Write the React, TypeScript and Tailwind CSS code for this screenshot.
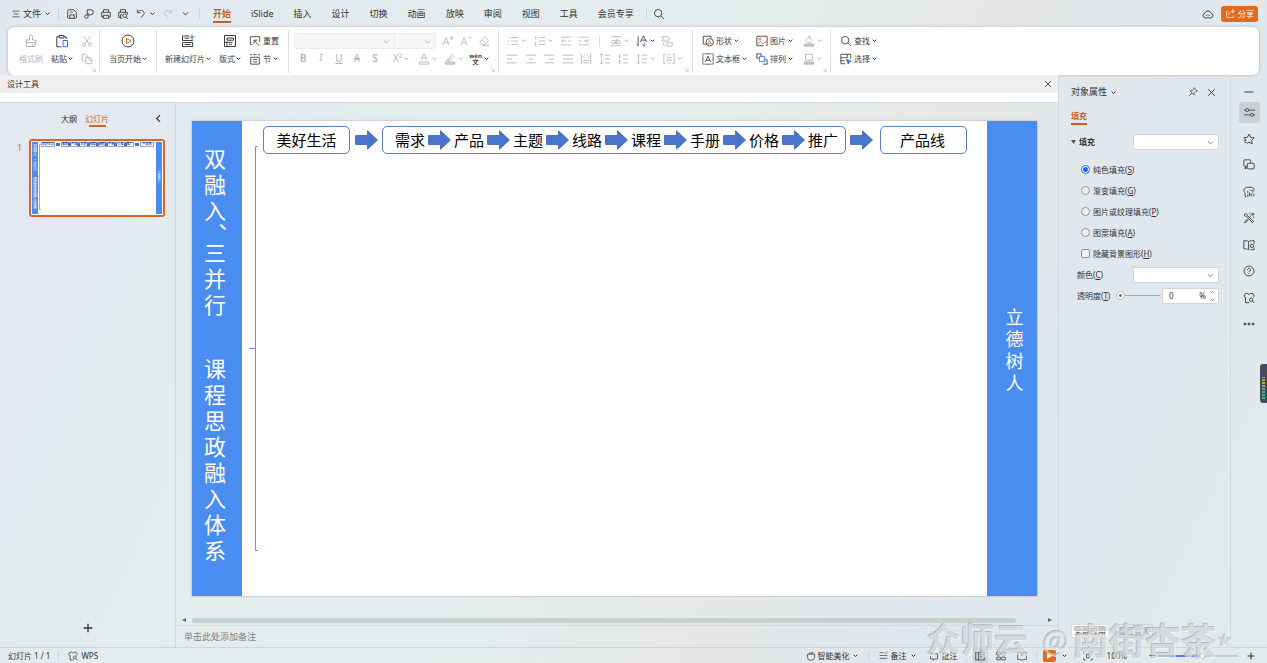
// App.tsx
import React, { useState } from 'react';
import clsx from 'clsx';

type GlyphProps = { size?: number; className?: string; children: React.ReactNode };

const Glyph: React.FC<GlyphProps> = ({ size = 13, className, children }) => (
  <svg
    width={size}
    height={size}
    viewBox="0 0 14 14"
    fill="none"
    stroke="currentColor"
    strokeWidth="1"
    className={clsx('shrink-0', className)}
    aria-hidden="true"
  >
    {children}
  </svg>
);

const ORANGE = '#d9652a';
const BLUE = '#3a6df0';

// 14x14 line icons
const icons: Record<string, React.ReactNode> = {
  menu: <path d="M2 3h10M3.500 7h7M2 11h10" />,
  save: <path d="M2 3.500V11a1 1 0 0 0 1 1h8a1 1 0 0 0 1-1V5L9 2H3a1 1 0 0 0-1 1zM4.500 12V8h5v4M5 4.800h3" />,
  output: <path d="M5 8V2h4a3 3 0 0 1 0 6H4a2 2 0 1 0 2 2V6" />,
  print: <path d="M4 5V2h6v3M4 10.500H2V5h10v5.500h-2M4 8.500h6V12H4z" />,
  preview: (
    <>
      <path d="M4 5V2h6v3M4 11H2V5h10v3M6 8H4v4h2" />
      <circle cx="9" cy="9" r="2.200" />
      <path d="M10.600 10.600 13 13" />
    </>
  ),
  undo: <path d="M3 2v4h4M3.200 5.800C5 3 8.500 2 10.500 4s1 4.500-.5 6L7.500 12" />,
  redo: <path d="M11 2v4H7M10.800 5.800C9 3 5.500 2 3.500 4s-1 4.500.5 6l2.500 2" />,
  search: (
    <>
      <circle cx="6" cy="6" r="4.300" />
      <path d="m9.200 9.200 3.800 3.800" />
    </>
  ),
  cloud: <path d="M4 11.500a2.800 2.800 0 0 1-.6-5.500 3.800 3.800 0 0 1 7.200 0 2.800 2.800 0 0 1-.6 5.500zM4.500 8.500h1M6.500 8.500h1M8.500 8.500h1" />,
  share: <path d="M4 4H3a1 1 0 0 0-1 1v6a1 1 0 0 0 1 1h7a1 1 0 0 0 1-1V9.500M4.500 9c.3-3 2-5 7-5M9 1.500 11.800 4 9 6.500" />,
  brush: <path d="M5.500 6V2.500a1.500 1.500 0 0 1 3 0V6H12v2.500H2V6zM2.800 8.500 2 12.500h9.200V8.500M8.500 12.500v-2" />,
  paste: (
    <>
      <path d="M4 2.800H1.800v10h4.500M9 2.800h2.200V5M4.200 1.500h4.600v2.500H4.200z" />
      <path d="M8 6.500h4.500v6.200H8z" stroke={BLUE} />
    </>
  ),
  cut: (
    <>
      <path d="m3 1.500 6 8M11 1.500l-6 8" />
      <circle cx="3.500" cy="11" r="1.800" />
      <circle cx="10.500" cy="11" r="1.800" />
    </>
  ),
  copy: <path d="M5 9.500H1.500v-8h4l2 2V5M5.500 5h4.500l2.500 2.500v5h-7zM9.500 5v3h3" />,
  play: (
    <>
      <circle cx="7" cy="7" r="6" />
      <path d="M5.500 4.300v5.400L10 7z" stroke={ORANGE} />
    </>
  ),
  newSlide: (
    <>
      <path d="M8 2H1.500v4.500h10.200V5.500M3.500 4.200h4.500M1.500 8.500h10.200v4H1.500zM3.500 10.500h6" />
      <path d="M11 .500v5M8.500 3h5" stroke="#1f9d6b" />
    </>
  ),
  layout: <path d="M1.500 1.500h11v11h-11zM4 4h6.500v2.200H4zM1.500 8.300h8M4 8.300v4M6 10.300h3" />,
  reset: <path d="M4 11H1.500V2h11v6M6 6l6 6.500M6 6v4M6 6h4" />,
  section: <path d="M1 2h2.500M5 2h4M10.500 2H13M2 5h10v8H2zM4.500 7.500h5M4.500 10.300h5" />,
  grow: <path d="m1 12 3.800-9L8.500 12M2.300 9h5M9 3.500h4.500M11.200 1.200v4.600" />,
  shrink: <path d="m1 12 3.800-9L8.500 12M2.300 9h5M9.500 3h4" />,
  eraser: <path d="M5 11.500 2 8.500 8 2l4.500 4.500-5 5zM4.500 5.800 9 10.300M5 12.500h8" />,
  fontColor: <path d="m3.500 8.500 3.500-7.500 3.500 7.500M4.700 6h4.600M1.500 10.500h11v2.500h-11z" />,
  highlight: (
    <>
      <path d="M3 8.500 10.500 1M5 8.500l3-1 4-4M3 8.500h4" />
      <path d="M1.500 10.500h11v2.500h-11z" fill="#d5d5d5" />
    </>
  ),
  bullets: <path d="M1 3h1.500M1 7h1.500M1 11h1.500M5 3h8M5 7h8M5 11h8" />,
  numbers: <path d="M1 2h1v3.500M1 8.500h1.500L1 12h1.800M5.500 3H13M5.500 7H13M5.500 11H13" />,
  outdent: <path d="M1 2.500h12M1 11.500h12M2 7h5M4 5 2 7l2 2M9.500 7H13" />,
  indent: <path d="M1 2.500h12M1 11.500h12M7 7h5M10 5l2 2-2 2M1 7h3" />,
  abc: (
    <>
      <path d="M1 2h12M1 12.500h12M6 6v4.500M8 3.800v6.700" />
      <circle cx="4" cy="8.200" r="2" />
      <circle cx="10" cy="8.200" r="2" />
    </>
  ),
  direction: (
    <>
      <path d="M2.500 1.500v11M.500 10.500l2 2M5 8.500 8.700 1l3.700 7.500M6.200 6h5" />
      <path d="M9.500 9v4M7.500 11l2 2 2-2" stroke={BLUE} />
    </>
  ),
  convert: <path d="M1 2h7l2 2.500L8 7H1l2-2.500zM7 8.500h6v4.500H7zM3 9v3h2.500" />,
  left: <path d="M1 2.500h12M1 7h6M1 11.500h11" />,
  center: <path d="M1 2.500h12M4 7h6M1.500 11.500h11" />,
  right: <path d="M1 2.500h12M7 7h6M2 11.500h11" />,
  justify: <path d="M1 2.500h12M1 7h12M1 11.500h12" />,
  distribute: <path d="M1.500 1v12M12.500 1v12M5.500 2.500 4 4l1.500 1.500M8.500 2.500 10 4 8.500 5.500M3.500 8.500h7M3.500 11.500h7" />,
  spaceUp: <path d="M3 1v5M1.500 2.500 3 1l1.500 1.500M3 8v5M1.500 11.500 3 13l1.500-1.500M7 2.500h6M7 7h6M7 11.500h6" />,
  spaceDown: <path d="M3 1v4.500M1.500 4 3 5.500 4.500 4M3 8.500V13M1.500 10 3 8.500 4.500 10M7 2.500h6M7 7h6M7 11.500h6" />,
  lineSpace: <path d="M3 1.500v11M1.500 3 3 1.500 4.500 3M1.500 11 3 12.500 4.500 11M7 2.500h6M7 7h6M7 11.500h6" />,
  alignText: <path d="M3 1.500H1v11h2M11 1.500h2v11h-2M4 5.500h6M4 8.500h6M5.500 3 7 1.500 8.500 3M5.500 11 7 12.500 8.500 11" />,
  shapes: (
    <>
      <path d="M5 10.500H1.500v-9h9V4" />
      <circle cx="9" cy="8.500" r="4.300" />
      <path d="m6.500 10.500 2-4 2.500 3.500z" stroke={ORANGE} />
    </>
  ),
  picture: (
    <>
      <path d="M9 12.500H1v-11h12v11h-1" />
      <path d="m1.500 11 3.800-3.500 3 3L13 6.500" stroke={ORANGE} />
      <circle cx="4.500" cy="4.700" r="1.200" stroke={ORANGE} />
    </>
  ),
  textBox: (
    <>
      <path d="M1 4v6M13 4v6M4 1h6M4 13h6" />
      <path d="M1 3.500V1h2.500M10.500 1H13v2.500M13 10.500V13h-2.500M3.500 13H1v-2.500" stroke={BLUE} />
      <path d="m4 10.500 3-7 3 7M5 8.500h4" />
    </>
  ),
  arrange: (
    <>
      <path d="M4 6H1V1h5v3M8 13h5V8h-3" />
      <path d="M4 4h6v6H4z" stroke={BLUE} />
    </>
  ),
  fillColor: (
    <>
      <path d="M3 6.500 7 2.500l4 4-2.500 2.500h-3zM5.500 1.500h3v2" />
      <path d="M1.500 10.500h11v2.500h-11z" fill="#c9c9c9" />
    </>
  ),
  outline: (
    <>
      <path d="M3 1.500h8v7H3z" />
      <path d="M1.500 10.500h11v2.500h-11z" fill="#c9c9c9" />
    </>
  ),
  select: (
    <>
      <path d="M1 1.500h11.500v5M1 1.500v4h7.500v-4M1 5.500v7h5M1 9h4.500" />
      <path d="m7.500 7.500 5.500 2-2.300 1-1 2.500z" stroke={BLUE} fill={BLUE} />
    </>
  ),
  corner: <path d="M3 3l7 7M10 4v6.500H3.500" />,
  pin: <path d="m8.500 1 4.500 4.500-2 .5-2.200 2.300-.3 2.700L3 5.500l2.700-.3L8 3zM5.500 8.500 1.500 12.500" />,
  close: <path d="m2 2 10 10M12 2 2 12" strokeWidth="1.500" />,
  dash: <path d="M.500 7h13" strokeWidth="1.300" />,
  settings: (
    <>
      <circle cx="4" cy="4" r="2" />
      <circle cx="10" cy="10" r="2" />
      <path d="M0 4h2M6 4h8M0 10h8M12 10h2" />
    </>
  ),
  star: <path d="M4 8.500 1 5.600 5.200 5 7 1.200 8.800 5l4.200.6-3 2.900.7 4.200L7 10.700l-2.500 1.400M1 9h2.500M2 11h2" />,
  animate: <path d="M4.500 8.500H2A1 1 0 0 1 1 7.500v-5.500A1 1 0 0 1 2 1h6a1 1 0 0 1 1 1v2.500M6 5h6a1 1 0 0 1 1 1v4.500a1 1 0 0 1-1 1H6a1 1 0 0 1-1-1V6a1 1 0 0 1 1-1zM3 9v3M1.500 10.500h3" />,
  assistant: (
    <>
      <path d="M2.500 8v4.500H4M2.500 8C.5 6.500.5 5 1.500 3.500 2.300 2 3.500 1.500 5 1.500h4c2 0 3.200.7 3.800 2 .4 1 .2 2-.8 2.500L8.500 5" />
      <path d="M5.500 5.500v2.500M7.500 7.500v4.500M9.500 8.500v3.500M5.500 10v2.500M11.500 7.500v1.500M11.500 12c1-.3 1.500-1 1.500-2.500" />
    </>
  ),
  tools: (
    <>
      <path d="M2 2.500c1.500-1 3-.5 3 1.500l7.500 7-1.500 1.500-7-7.500c-2 0-3-1-2-2.500zM5.500 8 1.500 12l1 1 4-4M8 5.500l2-2" />
      <circle cx="11.500" cy="2.500" r="1.200" />
      <path d="M8 1v1.500M12.500 5.500v1.500" />
    </>
  ),
  book: (
    <>
      <path d="M6.500 3C5 2 3 2 1 2v9.500c2 0 4 0 5.500 1.200zM6.500 3C9 1.500 11 2 13 2v3.500M8.500 12.500H13V10" />
      <circle cx="10.500" cy="8" r="2" />
    </>
  ),
  help: (
    <>
      <circle cx="7" cy="7" r="5.800" />
      <path d="M5.300 5.500a1.700 1.700 0 1 1 2.500 1.500c-.6.400-.8.700-.8 1.300M7 9.500v1" />
    </>
  ),
  shirt: (
    <>
      <path d="M3 6.500 1 5l1.500-3L5 1.500c1 1.500 3 1.500 4 0l2.500.5L13 5l-1.500 1.500M3 6v6.500h4.500" />
      <circle cx="9.500" cy="9" r="2" />
      <path d="M11 10.500 13 13" />
    </>
  ),
  more: (
    <>
      <circle cx="2.300" cy="7" r="1.200" fill="#9a9fa3" />
      <circle cx="7" cy="7" r="1.200" fill="#9a9fa3" />
      <circle cx="11.700" cy="7" r="1.200" fill="#9a9fa3" />
    </>
  ),
  plus: <path d="M7 1v12M1 7h12" strokeWidth="1.800" />,
  minus: <path d="M1 7h12" strokeWidth="2.200" />,
  beautify: <path d="M2 4.500h10V9a5 4 0 0 1-10 0zM4 4.500 5.500 2 7 4l2-2.500L10.500 4.500" />,
  notes: <path d="M1 2.500h6M1 7h12M1 11.500h12M8.500 2.500 10 4l3-3" />,
  comment: <path d="M4 4h8v7H8l-2 2v-2H2V7M3 1v4M1 3h4" />,
  normalView: <path d="M1 1.500h12v11H1zM5 1.500v11M7 5h4M7 8h4" />,
  gridView: <path d="M1 1.500h5v4H1zM8 1.500h5v4H8zM1 8.500h5v4H1zM8 8.500h5v4H8z" />,
  readView: <path d="M7 3C5 1.800 3 1.800 1 1.800v10c2 0 4 0 6 1.200 2-1.200 4-1.200 6-1.200v-10c-2 0-4 0-6 1.200v4" />,
  fit: <path d="M1 4V1.500h3M10 1.500h3V4M13 10v2.500h-3M4 12.500H1V10M5 4.500h4v5H5z" />,
};

const Chevron = ({ size = 5, className }: { size?: number; className?: string }) => (
  <svg
    width={size}
    height={size}
    viewBox="0 0 6 6"
    fill="none"
    stroke="currentColor"
    strokeWidth={size > 5 ? 0.8 : 1.2}
    className={clsx('shrink-0', className)}
    aria-hidden="true"
  >
    <path d="M.800 2 3 4.200 5.200 2" />
  </svg>
);

type ToolProps = {
  icon?: string;
  label?: string;
  name?: string;
  menu?: boolean;
  muted?: boolean;
  className?: string;
  children?: React.ReactNode;
};

const Tool: React.FC<ToolProps> = ({ icon, label, name, menu, muted, className, children }) => (
  <button
    type="button"
    aria-label={label ? undefined : name}
    className={clsx(
      'flex h-[18px] shrink-0 items-center gap-[2px] whitespace-nowrap',
      label ? 'justify-start' : 'justify-center',
      muted ? 'text-[#b4b4b4]' : 'text-[#3c3c3c]',
      className
    )}
  >
    {icon && <Glyph size={12}>{icons[icon]}</Glyph>}
    {children}
    {label && <span>{label}</span>}
    {menu && <Chevron />}
  </button>
);

// Tall button: icon above, caption below
const BigTool = ({ icon, label, menu, muted }: { icon: string; label: string; menu?: boolean; muted?: boolean }) => (
  <button
    type="button"
    className={clsx('flex shrink-0 flex-col items-center whitespace-nowrap', muted ? 'text-[#b4b4b4]' : 'text-[#3c3c3c]')}
  >
    <span className="flex h-[18px] items-center">
      <Glyph size={14}>{icons[icon]}</Glyph>
    </span>
    <span className="flex h-[18px] items-center gap-px">
      {label}
      {menu && <Chevron />}
    </span>
  </button>
);

const Group = ({ className, corner, children }: { className?: string; corner?: boolean; children: React.ReactNode }) => (
  <div className={clsx('relative h-[43px] shrink-0 border-r border-[#dedede] pt-[2px]', className)}>
    {children}
    {corner && (
      <Glyph size={6} className="absolute right-[2px] bottom-0 text-[#9a9a9a]">
        {icons.corner}
      </Glyph>
    )}
  </div>
);

const TABS = ['开始', 'iSlide', '插入', '设计', '切换', '动画', '放映', '审阅', '视图', '工具', '会员专享'];

const TitleBar: React.FC = () => {
  const [active, setActive] = useState('开始');

  return (
    <header className="flex h-[27px] shrink-0 items-center pl-[11px] pr-[9px] text-[9px]">
      <button type="button" className="flex items-center gap-[2px]">
        <Glyph size={10}>{icons.menu}</Glyph>
        <span>文件</span>
        <Chevron className="ml-[2px]" />
      </button>
      <span className="ml-2 h-3 w-px bg-[#cfd4d8]" />
      <div className="ml-1 flex items-center">
        {[
          ['save', '保存'],
          ['output', '输出'],
          ['print', '打印'],
          ['preview', '打印预览'],
        ].map(([icon, name]) => (
          <button key={icon} type="button" aria-label={name} className="flex w-[17px] justify-center">
            <Glyph size={12}>{icons[icon]}</Glyph>
          </button>
        ))}
        <button type="button" aria-label="撤销" className="ml-1 flex w-5 items-center justify-between">
          <Glyph size={11}>{icons.undo}</Glyph>
          <Chevron />
        </button>
        <button type="button" aria-label="恢复" className="ml-2 text-[#b9bfc4]">
          <Glyph size={11}>{icons.redo}</Glyph>
        </button>
        <button type="button" aria-label="自定义" className="ml-2">
          <Chevron size={7} />
        </button>
      </div>
      <span className="ml-[10px] h-3 w-px bg-[#cfd4d8]" />
      <nav className="ml-[13px] flex gap-5">
        {TABS.map((tab) => (
          <button
            key={tab}
            type="button"
            onClick={() => setActive(tab)}
            className={clsx(
              'mt-[3px] border-b-2 pb-px leading-[13px] whitespace-nowrap',
              tab === active ? 'border-[#cf5a1c] font-bold text-[#cf5a1c]' : 'border-transparent'
            )}
          >
            {tab}
          </button>
        ))}
      </nav>
      <span className="ml-[12px] h-3 w-px bg-[#cfd4d8]" />
      <button type="button" aria-label="搜索" className="ml-[6px]">
        <Glyph size={12}>{icons.search}</Glyph>
      </button>
      <div className="flex-1" />
      <Glyph size={12}>{icons.cloud}</Glyph>
      <button type="button" className="ml-[7px] flex h-4 items-center gap-[2px] rounded-[3px] bg-[#e2691d] px-[4px] text-[8px] text-white">
        <Glyph size={11}>{icons.share}</Glyph>
        分享
      </button>
    </header>
  );
};

const Ribbon: React.FC = () => (
  <section className="mx-2 flex h-[48px] shrink-0 items-center overflow-hidden rounded-md bg-white text-[8px] shadow-[0_0_3px_rgba(0,0,0,0.25)]">
    <Group className="flex w-[92px] gap-2 pl-[11px]" corner>
      <BigTool icon="brush" label="格式刷" muted />
      <BigTool icon="paste" label="粘贴" menu />
      <div className="flex flex-col">
        <Tool icon="cut" name="剪切" muted />
        <Tool icon="copy" name="复制" muted />
      </div>
    </Group>
    <Group className="flex w-[57px] justify-center">
      <BigTool icon="play" label="当页开始" menu />
    </Group>
    <Group className="flex w-[132px] gap-2 pl-[8px]">
      <BigTool icon="newSlide" label="新建幻灯片" menu />
      <BigTool icon="layout" label="版式" menu />
      <div className="flex flex-col">
        <Tool icon="reset" label="重置" />
        <Tool icon="section" label="节" menu />
      </div>
    </Group>
    <Group className="w-[210px] pl-[5px]" corner>
      <div className="flex items-center">
        <div className="mr-[3px] flex h-4 w-[142px] rounded-[3px] border border-[#ececec] bg-[#f7f7f7] text-[#b4b4b4]">
          <div className="relative w-[100px] border-r border-[#ececec]">
            <select aria-label="字体" disabled className="size-full appearance-none" />
            <Chevron size={7} className="absolute top-[4px] right-1" />
          </div>
          <div className="relative flex-1">
            <select aria-label="字号" disabled className="size-full appearance-none" />
            <Chevron size={7} className="absolute top-[4px] right-1" />
          </div>
        </div>
        <Tool icon="grow" name="增大字号" muted className="w-[18px]" />
        <Tool icon="shrink" name="减小字号" muted className="w-[18px]" />
        <Tool icon="eraser" name="清除格式" muted className="w-[18px]" />
      </div>
      <div className="flex text-[10px]">
        <Tool muted className="w-[18px] font-semibold">B</Tool>
        <Tool muted className="w-[18px] font-serif italic">I</Tool>
        <Tool muted className="w-[18px] underline">U</Tool>
        <Tool muted className="w-[18px] line-through">A</Tool>
        <Tool muted className="w-[18px] font-semibold">S</Tool>
        <Tool muted menu className="ml-1 w-[26px]">X²</Tool>
        <Tool icon="fontColor" name="字体颜色" muted menu className="w-[26px]" />
        <Tool icon="highlight" name="突出显示" muted menu className="w-[26px]" />
        <Tool menu className="w-[26px]">
          <span className="flex flex-col items-center text-[6px] leading-[6px] font-bold">
            <span>wén</span>
            <span>文</span>
          </span>
        </Tool>
      </div>
    </Group>
    <Group className="w-[194px] pl-1" corner>
      <div className="flex items-center">
        <Tool icon="bullets" name="项目符号" muted menu className="w-[27px]" />
        <Tool icon="numbers" name="编号" muted menu className="w-[27px]" />
        <Tool icon="outdent" name="减少缩进" muted className="w-[18px]" />
        <Tool icon="indent" name="增加缩进" muted className="w-[18px]" />
        <span className="mx-[6px] h-3 w-px bg-[#dedede]" />
        <Tool icon="abc" name="字符间距" muted menu className="w-[26px]" />
        <Tool icon="direction" name="文字方向" menu className="w-[26px]" />
        <Tool icon="convert" name="转换图形" muted className="w-[18px]" />
      </div>
      <div className="flex items-center">
        <div className="flex w-[129px] justify-between">
          {['left', 'center', 'right', 'justify', 'distribute', 'spaceUp', 'spaceDown'].map((icon) => (
            <Tool key={icon} icon={icon} name={icon} muted className="w-[18px]" />
          ))}
        </div>
        <Tool icon="lineSpace" name="行距" muted menu className="w-[27px]" />
        <Tool icon="alignText" name="对齐文本" muted menu className="w-[26px]" />
      </div>
    </Group>
    <Group className="grid w-[138px] grid-cols-[54px_46px_20px] content-start pl-[9px]" corner>
      <Tool icon="shapes" label="形状" menu />
      <Tool icon="picture" label="图片" menu />
      <Tool icon="fillColor" name="填充" muted menu />
      <Tool icon="textBox" label="文本框" menu />
      <Tool icon="arrange" label="排列" menu />
      <Tool icon="outline" name="轮廓" muted menu />
    </Group>
    <div className="h-[43px] pt-[2px] pl-[9px]">
      <Tool icon="search" label="查找" menu />
      <Tool icon="select" label="选择" menu />
    </div>
  </section>
);

const BlockArrow = () => (
  <svg width="23" height="20" viewBox="0 0 23 20" className="shrink-0" aria-hidden="true">
    <path d="M.500 5.500h12V.800L22.500 10l-10 9.200v-4.700H.500z" fill="#4874cb" stroke="#3a62ab" strokeWidth=".8" />
  </svg>
);

const STEPS = ['需求', '产品', '主题', '线路', '课程', '手册', '价格', '推广'];
const TITLE_A = '双融入';
const TITLE_B = '三并行';
const TITLE_C = '课程思政融入体系';

const Column = ({ text, className }: { text: string; className: string }) => (
  <>
    {text.split('').map((ch, i) => (
      <span key={i} className={className}>
        {ch}
      </span>
    ))}
  </>
);

const Slide: React.FC = () => (
  <div className="flex aspect-video w-full bg-white text-black shadow-[0_0_2px_rgba(0,0,0,0.3)]">
    <div className="flex w-[50px] shrink-0 flex-col items-center bg-[#4a8df0] pt-[24px] pr-[4px] text-[22px] text-white">
      <Column text={TITLE_A} className="h-[26px] leading-[26px]" />
      <span className="h-4 leading-[22px] [writing-mode:vertical-rl]">、</span>
      <Column text={TITLE_B} className="h-[26px] leading-[26px]" />
      <span className="h-[38px]" />
      <Column text={TITLE_C} className="h-[26px] leading-[26px]" />
    </div>
    <div className="flex min-w-0 flex-1 pt-[5px] pl-[7px]">
      <svg width="10" height="408" viewBox="0 0 10 408" fill="none" stroke="#6f92d8" className="mt-[18px] shrink-0" aria-hidden="true">
        <path d="M9 2.500H6.500v404H9M6.500 204.500H0" />
      </svg>
      <div className="ml-[4px] flex h-7 items-center text-[15px] whitespace-nowrap">
        <div className="flex h-7 w-[87px] items-center justify-center rounded-[5px] border border-[#5b7fc7]">美好生活</div>
        <div className="mr-[4px] ml-[5px] flex">
          <BlockArrow />
        </div>
        <div className="flex h-7 w-[464px] items-center gap-[3px] rounded-[5px] border border-[#5b7fc7] pl-[12px]">
          {STEPS.map((step, i) => (
            <React.Fragment key={step}>
              {i > 0 && <BlockArrow />}
              <span className="w-[30px] shrink-0">{step}</span>
            </React.Fragment>
          ))}
        </div>
        <div className="mr-[7px] ml-[4px] flex">
          <BlockArrow />
        </div>
        <div className="flex h-7 w-[87px] items-center justify-center rounded-[5px] border border-[#5b7fc7] pr-[2px]">产品线</div>
      </div>
    </div>
    <div className="flex w-[50px] shrink-0 flex-col items-center justify-center bg-[#4a8df0] pb-[18px] pl-[5px] text-[18px] text-white">
      <Column text="立德树人" className="h-[22px] leading-[22px]" />
    </div>
  </div>
);

const Thumbnail: React.FC = () => (
  <button
    type="button"
    aria-label="幻灯片 1"
    className="flex h-[78px] w-[136px] rounded-[3px] border-2 border-[#d9652a] bg-white p-px text-black"
  >
    <span className="flex h-full w-[6px] flex-col items-center bg-[#4a8df0] pt-[3px] text-[4px] text-white">
      <Column text={TITLE_A} className="h-1 leading-[4px]" />
      <span className="h-[3px]" />
      <Column text={TITLE_B} className="h-1 leading-[4px]" />
      <span className="h-[6px]" />
      <Column text={TITLE_C} className="h-1 leading-[4px]" />
    </span>
    <span className="flex flex-1">
      <svg width="3" height="66" viewBox="0 0 3 66" fill="none" stroke="#8eaae0" className="mt-[2px]" aria-hidden="true">
        <path d="M3 .500H1.500v65H3M1.500 33H0" />
      </svg>
      <span className="flex h-1 items-center text-[3px] leading-[3px] whitespace-nowrap">
        <span className="w-[14px] border border-[#8ba5dc]">美好生活</span>
        <span className="mx-px h-[3px] w-[4px] bg-[#4472c4]" />
        <span className="flex w-[73px] items-center justify-between border border-[#8ba5dc]">
          {STEPS.map((step, i) => (
            <React.Fragment key={step}>
              {i > 0 && <span className="h-[3px] w-[3px] bg-[#4472c4]" />}
              <span>{step}</span>
            </React.Fragment>
          ))}
        </span>
        <span className="mx-px h-[3px] w-[4px] bg-[#4472c4]" />
        <span className="w-[14px] border border-[#8ba5dc]">产品线</span>
      </span>
    </span>
    <span className="flex h-full w-[6px] flex-col items-center justify-center bg-[#4a8df0] text-[3px] text-white">
      <Column text="立德树人" className="h-[3px] leading-[3px]" />
    </span>
  </button>
);

const SlideList: React.FC = () => (
  <aside className="flex w-[176px] shrink-0 flex-col border-r border-[#d3d9dc]">
    <div className="flex items-start pt-[9px] pr-[12px] pl-[61px] text-[8px] leading-[13px]">
      <button type="button">大纲</button>
      <button type="button" className="ml-2 flex flex-col items-center text-[#cf6a35]">
        幻灯片
        <span className="h-[2px] w-[17px] bg-[#cf6a35]" />
      </button>
      <div className="flex-1" />
      <button type="button" aria-label="收起" className="pt-[2px]">
        <Chevron size={9} className="rotate-90" />
      </button>
    </div>
    <div className="mt-[12px] flex">
      <span className="w-[29px] pt-[3px] pl-[17px] text-[9px] leading-[12px] text-[#cf6a35]">1</span>
      <Thumbnail />
    </div>
    <div className="flex-1" />
    <button type="button" aria-label="新建幻灯片" className="mb-[14px] self-center">
      <Glyph size={10}>{icons.plus}</Glyph>
    </button>
  </aside>
);

const FILLS = [
  { text: '纯色填充', hotkey: 'S' },
  { text: '渐变填充', hotkey: 'G' },
  { text: '图片或纹理填充', hotkey: 'P' },
  { text: '图案填充', hotkey: 'A' },
];

const Hot = ({ k }: { k: string }) => (
  <>
    (<u>{k}</u>)
  </>
);

const DropDown = ({ id, label }: { id: string; label?: string }) => (
  <div className="relative h-4 w-[86px] rounded-[2px] border border-[#d0d5da] bg-white">
    <select id={id} aria-label={label} className="size-full appearance-none" />
    <Chevron size={7} className="absolute top-[4px] right-[4px] text-[#777]" />
  </div>
);

const PropertyPanel: React.FC = () => {
  const [fill, setFill] = useState('S');

  return (
    <aside className="flex w-[173px] shrink-0 flex-col border-r border-l border-[#d3d9dc] pt-[9px] pr-[11px] pl-[12px] text-[8px]">
      <div className="flex h-4 items-center text-[9px]">
        <button type="button" className="flex items-center gap-1">
          对象属性
          <Chevron />
        </button>
        <div className="flex-1" />
        <button type="button" aria-label="固定">
          <Glyph size={10}>{icons.pin}</Glyph>
        </button>
        <button type="button" aria-label="关闭" className="mr-[3px] ml-[9px]">
          <Glyph size={9}>{icons.close}</Glyph>
        </button>
      </div>
      <button type="button" className="mt-[10px] self-start border-b-2 border-[#cf5a1c] pb-px leading-[12px] font-bold text-[#cf5a1c]">
        填充
      </button>
      <div className="mt-[7px] flex h-5 items-center">
        <svg width="5" height="4" viewBox="0 0 5 4" fill="#555" aria-hidden="true">
          <path d="M0 0h5L2.500 4z" />
        </svg>
        <span className="ml-[3px] flex-1 font-bold">填充</span>
        <DropDown id="preset" label="填充预设" />
      </div>
      <div className="mt-[7px] pl-[10px]">
        {FILLS.map((f) => (
          <label key={f.hotkey} className="flex h-[21px] items-center gap-[3px]">
            <input
              type="radio"
              name="fill"
              checked={fill === f.hotkey}
              onChange={() => setFill(f.hotkey)}
              className="size-[9px] appearance-none rounded-full border border-[#8f959a] bg-white/40 checked:border-[#2273f5] checked:bg-[radial-gradient(circle,#1669f5_0_2px,#fff_3px)]"
            />
            <span>
              {f.text}
              <Hot k={f.hotkey} />
            </span>
          </label>
        ))}
        <label className="flex h-[21px] items-center gap-[3px]">
          <input type="checkbox" className="size-[9px] appearance-none rounded-[2px] border border-[#8f959a] bg-white/40 checked:bg-[#2273f5]" />
          <span>
            隐藏背景图形
            <Hot k="H" />
          </span>
        </label>
      </div>
      <div className="flex h-[21px] items-center pl-[6px]">
        <label htmlFor="color" className="flex-1">
          颜色
          <Hot k="C" />
        </label>
        <DropDown id="color" />
      </div>
      <div className="flex h-[21px] items-center pl-[6px]">
        <label htmlFor="opacity" className="whitespace-nowrap">
          透明度
          <Hot k="T" />
        </label>
        <input
          id="opacity"
          type="range"
          defaultValue={0}
          className="ml-[6px] h-px w-[44px] appearance-none bg-[#a5abb0] [&::-webkit-slider-thumb]:size-[9px] [&::-webkit-slider-thumb]:appearance-none [&::-webkit-slider-thumb]:rounded-full [&::-webkit-slider-thumb]:border [&::-webkit-slider-thumb]:border-[#b9bec2] [&::-webkit-slider-thumb]:bg-[radial-gradient(circle,#777_0_1px,#fff_2px)]"
        />
        <div className="flex-1" />
        <div className="flex h-4 w-[57px] items-center rounded-[2px] border border-[#d0d5da] bg-white pr-[3px] pl-[6px]">
          <input aria-label="透明度数值" defaultValue="0" className="w-0 flex-1 bg-transparent" />
          <span>%</span>
          <span className="ml-[4px] flex flex-col gap-[2px] text-[#888]">
            <Chevron className="rotate-180" />
            <Chevron />
          </span>
        </div>
      </div>
      <div className="flex-1" />
      <div className="mb-[9px] flex gap-[6px]">
        <button type="button" className="h-[14px] rounded-[2px] border border-[#dcdfe2] bg-white px-[2px] leading-[12px]">
          全部应用
        </button>
        <button type="button" disabled className="h-[14px] rounded-[2px] border border-[#cdd2d5] px-[2px] leading-[12px] text-[#a0a5a8]">
          重置背景
        </button>
      </div>
    </aside>
  );
};

const SideTools: React.FC = () => (
  <aside className="relative flex w-9 shrink-0 flex-col items-center pt-[12px]">
    <button type="button" aria-label="最小化">
      <Glyph size={10}>{icons.dash}</Glyph>
    </button>
    <button type="button" aria-label="对象属性" className="mt-[5px] flex size-[21px] items-center justify-center rounded-[3px] bg-[#cbd0d5]">
      <Glyph size={11}>{icons.settings}</Glyph>
    </button>
    <div className="mt-[5px] flex h-[207px] flex-col justify-between">
      {['star', 'animate', 'assistant', 'tools', 'book', 'help', 'shirt', 'more'].map((icon) => (
        <button key={icon} type="button" aria-label={icon} className="flex size-[22px] items-center justify-center">
          <Glyph size={12}>{icons[icon]}</Glyph>
        </button>
      ))}
    </div>
    {/* docked level meter */}
    <div className="absolute top-[289px] right-0 flex h-[39px] w-[7px] items-end justify-center rounded-l-[3px] bg-[#454b5b] pb-[3px]">
      <span className="h-[23px] w-[3px] bg-[repeating-linear-gradient(to_top,transparent_0_1px,#4fae8c_1px_3px)]" />
      <span className="absolute bottom-[15px] h-[11px] w-[3px] bg-[repeating-linear-gradient(to_top,#454b5b_0_1px,#b5a555_1px_3px)]" />
    </div>
  </aside>
);

const Separator = ({ className }: { className?: string }) => <span className={clsx('h-[10px] w-px shrink-0 bg-[#cfd5d8]', className)} />;

const StatusBar: React.FC = () => (
  <footer className="flex h-4 shrink-0 items-center border-t border-[#d0d6d9] pr-[12px] pl-2 text-[8px] whitespace-nowrap">
    <span>幻灯片 1 / 1</span>
    <Separator className="ml-[8px]" />
    <button type="button" className="ml-[9px] flex items-center gap-[3px]">
      <Glyph size={10}>{icons.shirt}</Glyph>
      WPS
    </button>
    <div className="flex-1" />
    <button type="button" className="flex items-center gap-[2px]">
      <Glyph size={10}>{icons.beautify}</Glyph>
      智能美化
      <Chevron className="ml-px" />
    </button>
    <Separator className="mx-[10px]" />
    <button type="button" className="flex items-center gap-[3px]">
      <Glyph size={9}>{icons.notes}</Glyph>
      备注
      <Chevron className="ml-px" />
    </button>
    <button type="button" className="ml-[13px] flex items-center gap-[3px]">
      <Glyph size={10}>{icons.comment}</Glyph>
      批注
    </button>
    <Separator className="mr-[6px] ml-[8px]" />
    <button type="button" aria-label="普通视图" className="flex h-[15px] w-[15px] items-center justify-center rounded-[2px] bg-[#cbd1d4]">
      <Glyph size={10}>{icons.normalView}</Glyph>
    </button>
    <button type="button" aria-label="幻灯片浏览" className="ml-[8px]">
      <Glyph size={10}>{icons.gridView}</Glyph>
    </button>
    <button type="button" aria-label="阅读视图" className="ml-[11px]">
      <Glyph size={10}>{icons.readView}</Glyph>
    </button>
    <Separator className="mr-[6px] ml-[9px]" />
    <button type="button" aria-label="放映" className="flex h-3 w-[13px] items-center justify-center rounded-[2px] bg-[#e2691d]">
      <svg width="5" height="6" viewBox="0 0 5 6" fill="#fff" aria-hidden="true">
        <path d="M0 0v6l5-3z" />
      </svg>
    </button>
    <Chevron className="ml-[6px]" />
    <Separator className="mr-[8px] ml-[7px]" />
    <Glyph size={10}>{icons.fit}</Glyph>
    <span className="ml-[14px]">100%</span>
    <Chevron className="ml-[7px] text-[#aaa]" />
    <button type="button" aria-label="缩小" className="ml-[10px]">
      <Glyph size={7}>{icons.minus}</Glyph>
    </button>
    <input
      type="range"
      aria-label="缩放"
      defaultValue={56}
      className="ml-[2px] h-[2px] w-[80px] appearance-none bg-[linear-gradient(to_right,#4a86dd_56%,#c6cccf_56%)] [&::-webkit-slider-thumb]:size-[6px] [&::-webkit-slider-thumb]:appearance-none [&::-webkit-slider-thumb]:rounded-full [&::-webkit-slider-thumb]:border [&::-webkit-slider-thumb]:border-[#b9bec2] [&::-webkit-slider-thumb]:bg-white"
    />
    <button type="button" aria-label="放大" className="ml-[9px]">
      <Glyph size={8}>{icons.plus}</Glyph>
    </button>
  </footer>
);

const App: React.FC = () => (
  <div className="relative flex h-screen flex-col overflow-hidden bg-[linear-gradient(115deg,#e3e8ef_0%,#e4ecee_30%,#e5ecec_50%,#e6e8e6_64%,#e0e7ee_78%,#e1ebeb_100%)] font-['Noto_Sans','Noto_Sans_CJK_SC',sans-serif] text-[#333]">
    <TitleBar />
    <Ribbon />
    <main className="flex min-h-0 flex-1">
      <div className="flex min-w-0 flex-1 flex-col">
        <div className="flex h-[18px] shrink-0 items-center justify-between bg-[#efefef] pr-[6px] pl-[7px] text-[8px]">
          设计工具
          <button type="button" aria-label="关闭设计工具">
            <Glyph size={8}>{icons.close}</Glyph>
          </button>
        </div>
        <div className="h-[10px] shrink-0 border-b border-[#d6dadd] bg-white" />
        <div className="flex min-h-0 flex-1">
          <SlideList />
          <div className="flex min-w-0 flex-1 flex-col">
            <div className="min-h-0 flex-1 overflow-hidden pt-[18px] pr-[21px] pl-4">
              <Slide />
            </div>
            <div className="flex h-[10px] shrink-0 items-center gap-[6px] px-[6px] text-[#666]">
              <svg width="4" height="4" viewBox="0 0 4 4" fill="currentColor" aria-hidden="true">
                <path d="M4 0v4L0 2z" />
              </svg>
              <span className="h-[5px] flex-1 rounded-[2px] bg-[#c9cecf]" />
              <svg width="4" height="4" viewBox="0 0 4 4" fill="currentColor" className="ml-[26px]" aria-hidden="true">
                <path d="M0 0v4l4-2z" />
              </svg>
            </div>
            <textarea
              aria-label="备注"
              placeholder="单击此处添加备注"
              className="block h-[22px] shrink-0 resize-none border-t border-[#d3d9dc] px-2 pt-1 text-[9px] leading-[13px] placeholder:text-[#7d8385]"
            />
          </div>
        </div>
      </div>
      <PropertyPanel />
      <SideTools />
    </main>
    <StatusBar />
    {/* author mark */}
    <div className="pointer-events-none absolute right-[34px] bottom-[5px] flex items-center gap-[14px] font-['Noto_Sans_CJK_SC',sans-serif] leading-[38px] font-bold whitespace-nowrap text-[#d3d5d6] opacity-70 [text-shadow:-1px_-1px_0_#a4a7a8,1px_1px_0_#f6f7f7]">
      <span className="text-[34px]">众师云</span>
      <span className="flex items-center text-[36px]">
        <span className="mr-1 text-[28px] font-normal">@</span>南街杏茶<span className="text-[16px]">★</span>
      </span>
    </div>
  </div>
);

export default App;
